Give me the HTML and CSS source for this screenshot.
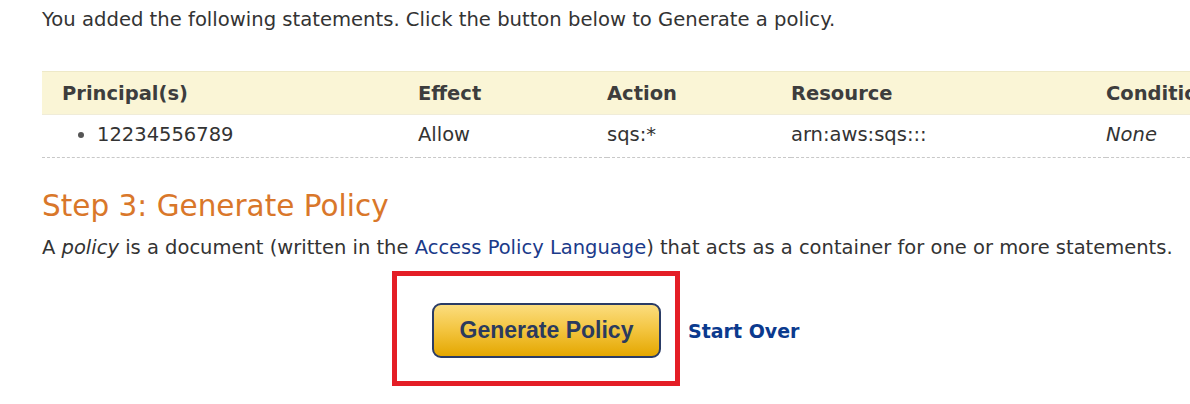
FILE: index.html
```html
<!DOCTYPE html>
<html>
<head>
<meta charset="utf-8">
<link rel="stylesheet" href="styles.css">
</head>
<body>
<div class="page">
  <p class="intro">You added the following statements. Click the button below to Generate a policy.</p>
  <table class="stmts">
    <thead>
      <tr>
        <th class="c1">Principal(s)</th>
        <th class="c2">Effect</th>
        <th class="c3">Action</th>
        <th class="c4">Resource</th>
        <th class="c5">Conditions</th>
      </tr>
    </thead>
    <tbody>
      <tr>
        <td class="c1"><ul class="plist"><li>12234556789</li></ul></td>
        <td class="c2">Allow</td>
        <td class="c3">sqs:*</td>
        <td class="c4">arn:aws:sqs:::</td>
        <td class="c5"><em>None</em></td>
      </tr>
    </tbody>
  </table>
  <h2 class="step">Step 3: Generate Policy</h2>
  <p class="desc">A <em>policy</em> is a document (written in the <a href="#" class="link">Access Policy Language</a>) that acts as a container for one or more statements.</p>
  <div class="actions">
    <div class="highlight">
      <button class="gen-btn">Generate Policy</button>
    </div>
    <a href="#" class="start-over">Start Over</a>
  </div>
</div>
</body>
</html>
```
FILE: styles.css
```css
html, body {
  margin: 0;
  padding: 0;
  background: #ffffff;
  overflow: hidden;
}
body {
  width: 1190px;
  height: 404px;
  font-family: "DejaVu Sans", Verdana, sans-serif;
  color: #333333;
}
.page {
  padding: 0 0 0 42px;
  overflow: hidden;
}
.intro {
  margin: 0;
  padding-top: 8px;
  font-size: 19.6px;
  line-height: 24px;
  color: #333333;
  white-space: nowrap;
}
.stmts {
  margin-top: 39px;
  border-collapse: collapse;
  width: 1148px;
  table-layout: fixed;
  font-size: 19.5px;
}
.stmts thead tr {
  background: #faf5d6;
  border-top: 1px solid #eee9c8;
}
.stmts th {
  text-align: left;
  font-weight: bold;
  color: #3d3d3d;
  height: 42px;
  padding: 0;
  vertical-align: middle;
  font-size: 19.5px;
  white-space: nowrap;
  overflow: visible;
}
.stmts tbody tr {
  border-top: 1px solid #f0ecd8;
  border-bottom: 1px dashed #c8c8c8;
}
.stmts td {
  height: 39px;
  padding: 0 0 3px 0;
  vertical-align: middle;
  color: #333333;
  white-space: nowrap;
}
.c1 { width: 356px; padding-left: 20px !important; }
.c2 { width: 189px; }
.c3 { width: 184px; }
.c4 { width: 315px; }
.plist {
  margin: 0;
  padding: 0 0 0 35px;
  list-style: disc;
}
.plist li::marker {
  color: #555555;
}
.step {
  margin: 30px 0 0 0;
  font-size: 29.5px;
  line-height: 36px;
  font-weight: normal;
  color: #d9772a;
}
.desc {
  margin: 12px 0 0 0;
  font-size: 19.5px;
  line-height: 24px;
  color: #333333;
  white-space: nowrap;
}
.link {
  color: #1a3a8a;
  text-decoration: none;
}
.actions {
  display: flex;
  align-items: center;
  margin-top: 11px;
  padding-left: 350px;
}
.highlight {
  border: 5px solid #e41e26;
  width: 278px;
  height: 105px;
  box-sizing: content-box;
  display: flex;
  align-items: flex-start;
}
.gen-btn {
  margin-left: 35px;
  margin-top: 27px;
  width: 229px;
  height: 55px;
  border: 2px solid #2a3c66;
  border-radius: 9px;
  background: linear-gradient(#fbdd7e 0%, #f3c43e 50%, #e4a700 100%);
  font-family: "Liberation Sans", Arial, sans-serif;
  font-weight: bold;
  font-size: 23px;
  color: #2b3a5e;
  box-sizing: border-box;
  padding: 0;
}
.start-over {
  margin-left: 8px;
  margin-top: 4px;
  font-family: "DejaVu Sans", Verdana, sans-serif;
  font-weight: bold;
  font-size: 19px;
  color: #0b3a8e;
  text-decoration: none;
}
```
